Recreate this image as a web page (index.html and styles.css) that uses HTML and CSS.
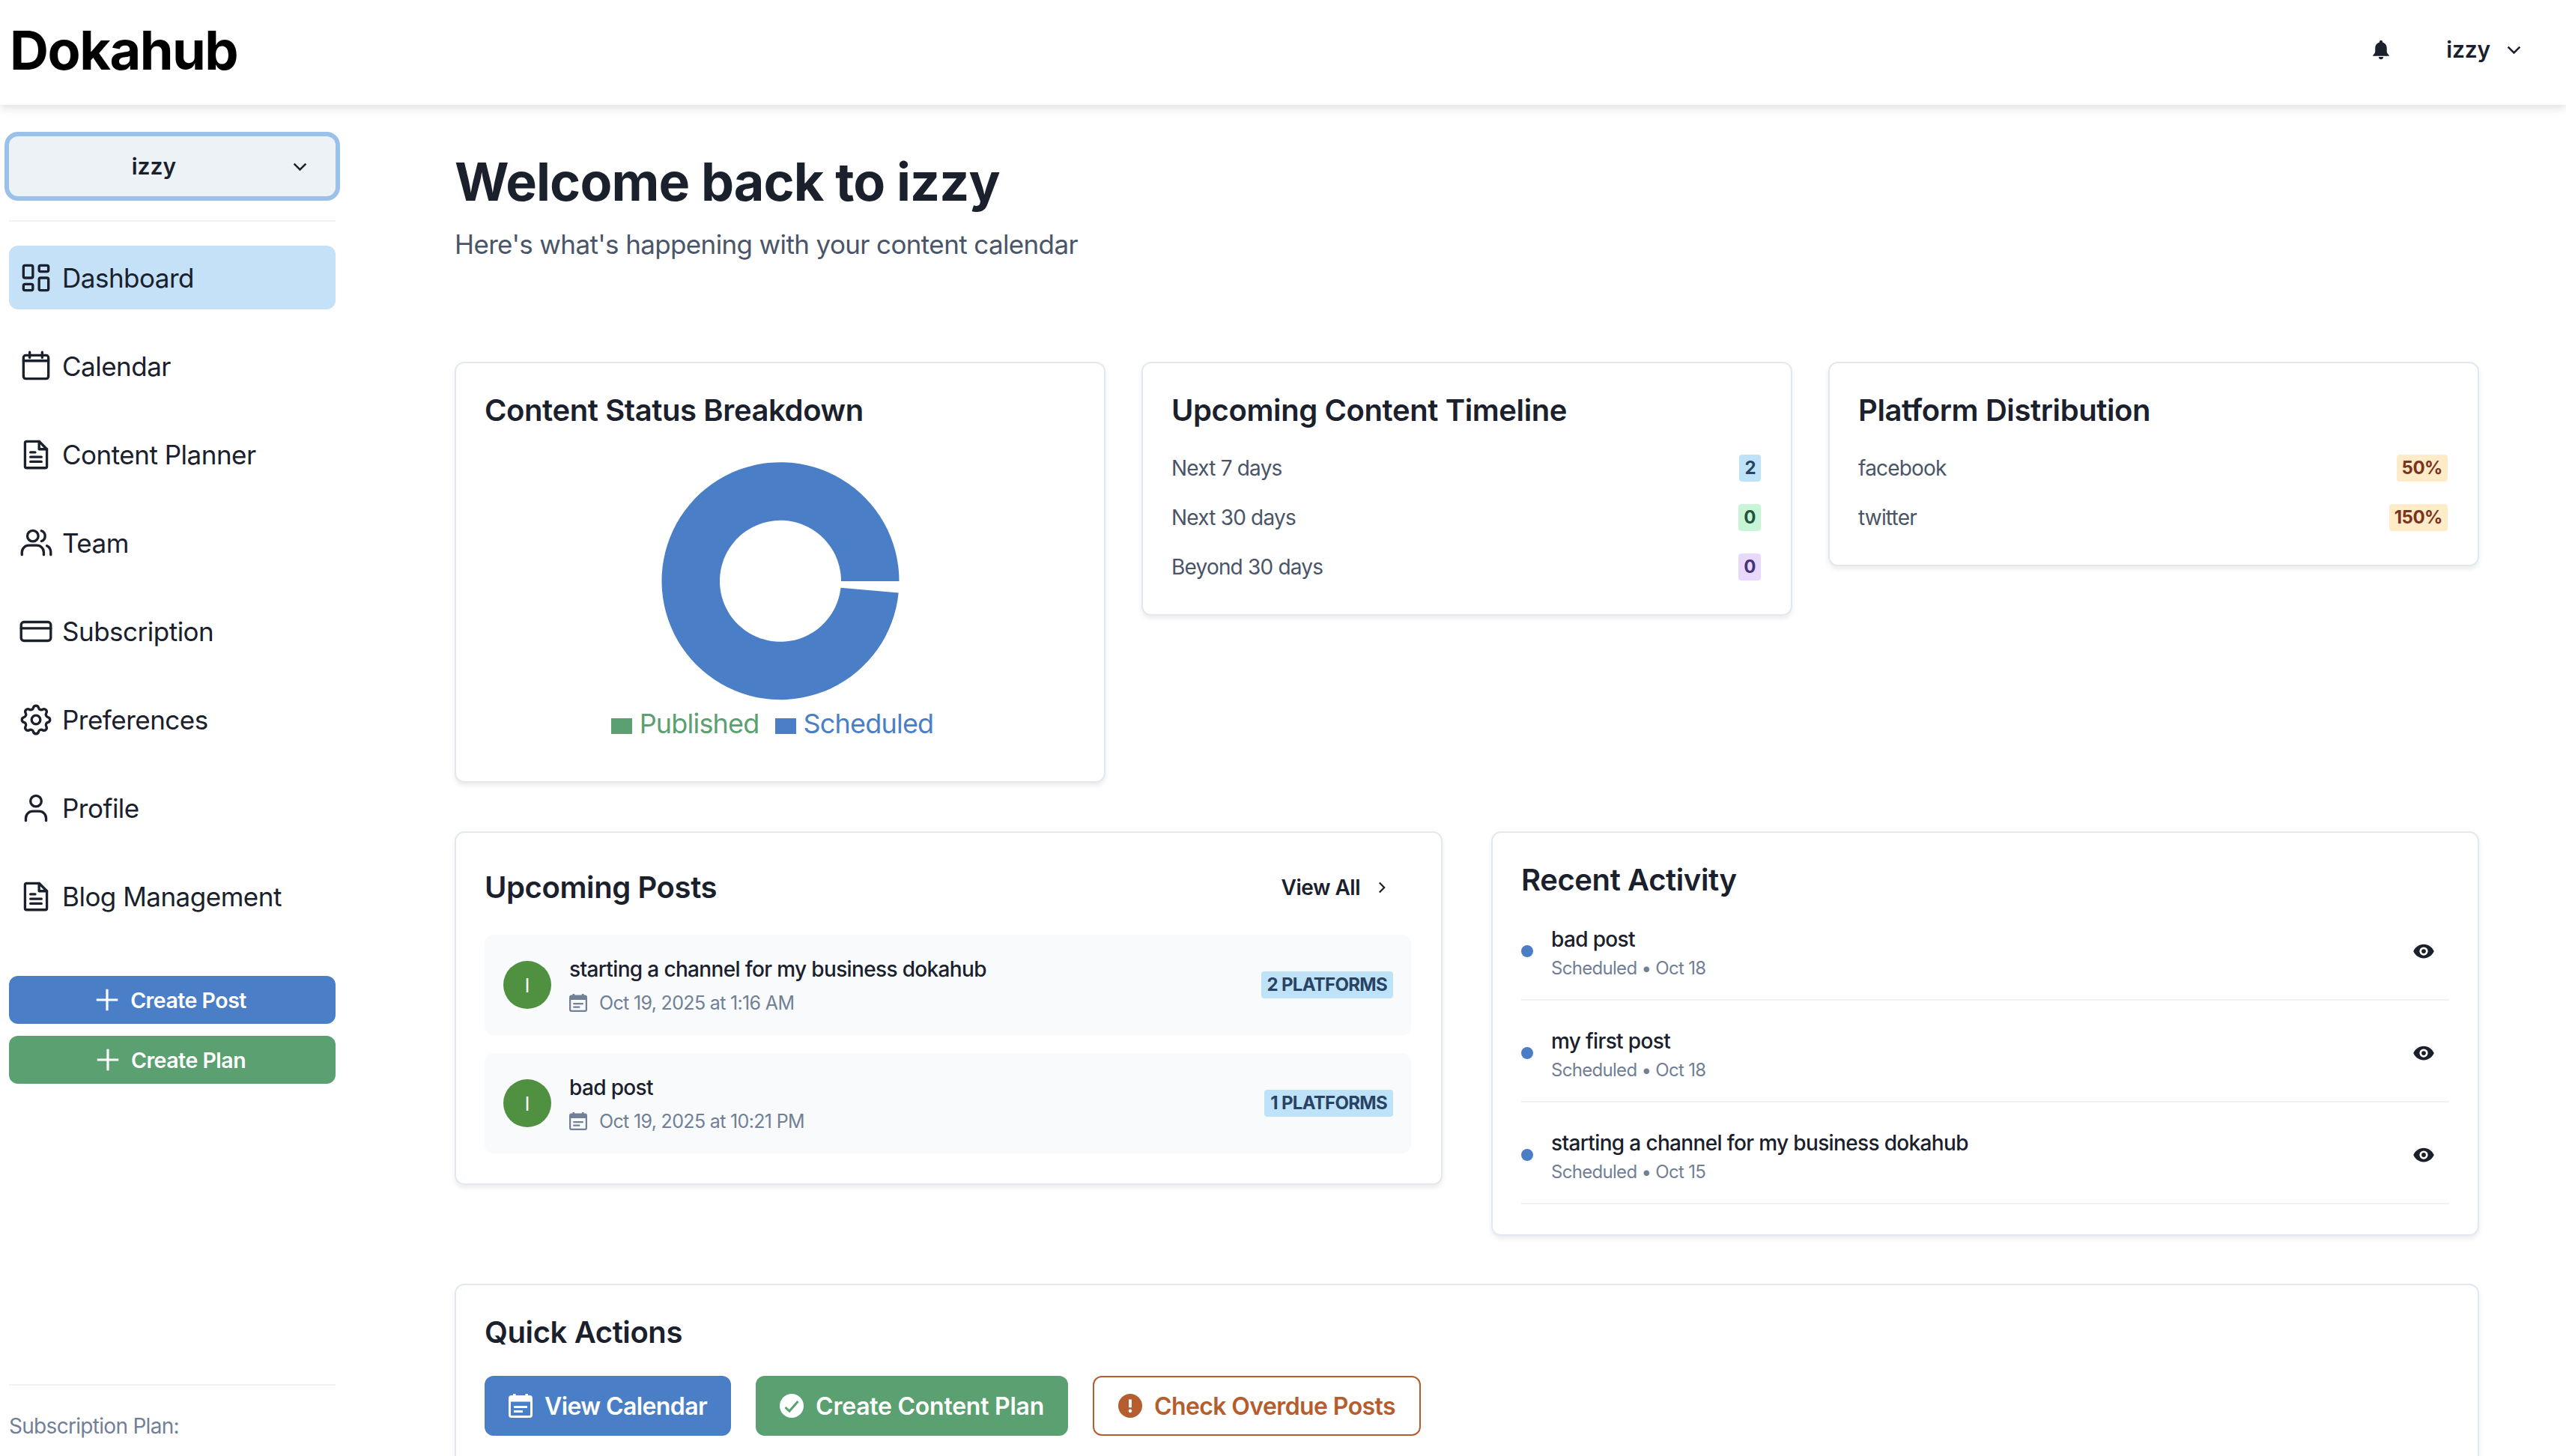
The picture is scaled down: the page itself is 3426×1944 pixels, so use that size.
FILE: index.html
```html
<!DOCTYPE html>
<html lang="en">
<head>
<meta charset="utf-8">
<title>Dokahub</title>
<link rel="stylesheet" href="styles.css">
</head>
<body>
<header class="topbar">
  <div class="logo">Dokahub</div>
  <div class="topbar-right">
    <svg class="bell" viewBox="0 0 24 24"><path d="M12 2.2a1.6 1.6 0 0 1 1.6 1.6v.5c3 .8 4.6 3.3 4.6 6.5v3.6c0 1.3 1.2 2.7 2.6 4.1v.5H3.2v-.5c1.4-1.4 2.6-2.8 2.6-4.1v-3.6c0-3.2 1.600-5.700 4.600-6.500v-.5A1.600 1.600 0 0 1 12 2.200z"/><path d="M9.500 20h5a2.500 2.500 0 0 1-5 0z"/></svg>
    <span class="top-user">izzy</span>
    <svg class="chev" viewBox="0 0 24 24"><path d="M5 8.500l7 7 7-7"/></svg>
  </div>
</header>
<div class="shell">
  <aside class="sidebar">
    <button class="picker"><span class="picker-name">izzy</span><svg class="chev" viewBox="0 0 24 24"><path d="M5 8.500l7 7 7-7"/></svg></button>
    <div class="side-rule"></div>
    <nav class="nav">
      <a class="nav-item active"><svg class="ico" viewBox="0 0 24 24"><rect x="4" y="4" width="6" height="8" rx="1"/><rect x="4" y="16" width="6" height="4" rx="1"/><rect x="14" y="12" width="6" height="8" rx="1"/><rect x="14" y="4" width="6" height="4" rx="1"/></svg>Dashboard</a>
      <a class="nav-item"><svg class="ico" viewBox="0 0 24 24"><rect x="4" y="5" width="16" height="15" rx="1.500"/><path d="M8 3v3.500M16 3v3.500M4 8.500h16"/></svg>Calendar</a>
      <a class="nav-item"><svg class="ico" viewBox="0 0 24 24"><path d="M6 3.500h8l5 5v11a1 1 0 0 1-1 1H6a1 1 0 0 1-1-1v-15a1 1 0 0 1 1-1z"/><path d="M14 3.500v5h5M8.500 10.500h3M8.500 13.500h7M8.500 16.500h7"/></svg>Content Planner</a>
      <a class="nav-item"><svg class="ico" viewBox="0 0 24 24"><circle cx="10" cy="7.500" r="3.500"/><path d="M3 19.500v-1.500a4.500 4.500 0 0 1 4.500-4.500h5a4.500 4.500 0 0 1 4.500 4.500v1.500M15.500 4.200a3.500 3.500 0 0 1 0 6.600M19 13.800a4.500 4.500 0 0 1 2.500 4.200v1.500"/></svg>Team</a>
      <a class="nav-item"><svg class="ico" viewBox="0 0 24 24"><rect x="2.500" y="6" width="19" height="12" rx="1.800"/><path d="M2.500 10h19"/></svg>Subscription</a>
      <a class="nav-item"><svg class="ico" viewBox="0 0 24 24"><path d="M10.325 4.317c.426-1.756 2.924-1.756 3.350 0a1.724 1.724 0 0 0 2.573 1.066c1.543-.94 3.310.826 2.370 2.370a1.724 1.724 0 0 0 1.065 2.572c1.756.426 1.756 2.924 0 3.350a1.724 1.724 0 0 0-1.066 2.573c.94 1.543-.826 3.310-2.370 2.370a1.724 1.724 0 0 0-2.572 1.065c-.426 1.756-2.924 1.756-3.350 0a1.724 1.724 0 0 0-2.573-1.066c-1.543.94-3.310-.826-2.370-2.370a1.724 1.724 0 0 0-1.065-2.572c-1.756-.426-1.756-2.924 0-3.350a1.724 1.724 0 0 0 1.066-2.573c-.94-1.543.826-3.310 2.370-2.370 1 .608 2.296.07 2.572-1.065z"/><circle cx="12" cy="12" r="2.800"/></svg>Preferences</a>
      <a class="nav-item"><svg class="ico" viewBox="0 0 24 24"><circle cx="12" cy="7.500" r="3.500"/><path d="M5.500 20v-1.500a4.500 4.500 0 0 1 4.500-4.500h4a4.500 4.500 0 0 1 4.500 4.500v1.500"/></svg>Profile</a>
      <a class="nav-item"><svg class="ico" viewBox="0 0 24 24"><path d="M6 3.500h8l5 5v11a1 1 0 0 1-1 1H6a1 1 0 0 1-1-1v-15a1 1 0 0 1 1-1z"/><path d="M14 3.500v5h5M8.500 10.500h3M8.500 13.500h7M8.500 16.500h7"/></svg>Blog Management</a>
    </nav>
    <div class="side-actions">
      <button class="side-btn blue"><svg class="plus" viewBox="0 0 24 24"><path d="M12 3v18M3 12h18"/></svg>Create Post</button>
      <button class="side-btn green"><svg class="plus" viewBox="0 0 24 24"><path d="M12 3v18M3 12h18"/></svg>Create Plan</button>
    </div>
    <div class="side-foot">Subscription Plan:</div>
  </aside>
  <main class="main">
    <h1 class="page-title">Welcome back to izzy</h1>
    <p class="page-sub">Here's what's happening with your content calendar</p>

    <section class="row-three">
      <article class="card chart-card">
        <h2 class="card-title">Content Status Breakdown</h2>
        <svg class="donut" viewBox="0 0 320 320"><path d="M318.500 160A158.500 158.500 0 1 0 317.700 175.600L240.500 168.800A81 81 0 1 1 241 160Z"/></svg>
        <div class="legend">
          <span class="leg leg-green"><i class="swatch"></i>Published</span>
          <span class="leg leg-blue"><i class="swatch"></i>Scheduled</span>
        </div>
      </article>
      <article class="card">
        <h2 class="card-title">Upcoming Content Timeline</h2>
        <ul class="stat-list">
          <li class="stat"><span>Next 7 days</span><b class="tag tag-blue">2</b></li>
          <li class="stat"><span>Next 30 days</span><b class="tag tag-green">0</b></li>
          <li class="stat"><span>Beyond 30 days</span><b class="tag tag-purple">0</b></li>
        </ul>
      </article>
      <article class="card">
        <h2 class="card-title">Platform Distribution</h2>
        <ul class="stat-list">
          <li class="stat"><span>facebook</span><b class="tag tag-orange">50%</b></li>
          <li class="stat"><span>twitter</span><b class="tag tag-orange">150%</b></li>
        </ul>
      </article>
    </section>

    <section class="row-two">
      <article class="card">
        <div class="card-head">
          <h2 class="card-title">Upcoming Posts</h2>
          <a class="view-all">View All<svg class="chev-r" viewBox="0 0 24 24"><path d="M8.500 5l7 7-7 7"/></svg></a>
        </div>
        <div class="post-list">
          <div class="post">
            <span class="avatar">I</span>
            <div class="post-body">
              <div class="post-title">starting a channel for my business dokahub</div>
              <div class="post-date"><svg class="cal-s" viewBox="0 0 32 32"><rect x="1.500" y="3.500" width="29" height="27" rx="2.500" fill="none" stroke="currentColor" stroke-width="3"/><path d="M2 4h28v6.500H2zM6 0h3.500v4H6zM22.500 0H26v4h-3.500z"/><path d="M7 16h18v3H7zM7 22h12v3H7z"/></svg>Oct 19, 2025 at 1:16 AM</div>
            </div>
            <span class="plat">2 Platforms</span>
          </div>
          <div class="post">
            <span class="avatar">I</span>
            <div class="post-body">
              <div class="post-title">bad post</div>
              <div class="post-date"><svg class="cal-s" viewBox="0 0 32 32"><rect x="1.500" y="3.500" width="29" height="27" rx="2.500" fill="none" stroke="currentColor" stroke-width="3"/><path d="M2 4h28v6.500H2zM6 0h3.500v4H6zM22.500 0H26v4h-3.500z"/><path d="M7 16h18v3H7zM7 22h12v3H7z"/></svg>Oct 19, 2025 at 10:21 PM</div>
            </div>
            <span class="plat">1 Platforms</span>
          </div>
        </div>
      </article>
      <article class="card">
        <h2 class="card-title">Recent Activity</h2>
        <div class="act-list">
          <div class="act"><i class="dot"></i><div class="act-body"><div class="act-title">bad post</div><div class="act-meta">Scheduled • Oct 18</div></div><svg class="eye" viewBox="0 0 24 24"><path fill-rule="evenodd" d="M12 4.500c5 0 9.200 3.100 11 7.500-1.800 4.400-6 7.500-11 7.500S2.800 16.400 1 12c1.800-4.400 6-7.500 11-7.500zm0 3a4.500 4.500 0 1 0 0 9 4.500 4.500 0 0 0 0-9zm0 2.200a2.300 2.300 0 1 1 0 4.600 2.300 2.300 0 0 1 0-4.600z"/></svg></div>
          <div class="act"><i class="dot"></i><div class="act-body"><div class="act-title">my first post</div><div class="act-meta">Scheduled • Oct 18</div></div><svg class="eye" viewBox="0 0 24 24"><path fill-rule="evenodd" d="M12 4.500c5 0 9.200 3.100 11 7.500-1.800 4.400-6 7.500-11 7.500S2.800 16.400 1 12c1.800-4.400 6-7.500 11-7.500zm0 3a4.500 4.500 0 1 0 0 9 4.500 4.500 0 0 0 0-9zm0 2.200a2.300 2.300 0 1 1 0 4.600 2.300 2.300 0 0 1 0-4.600z"/></svg></div>
          <div class="act"><i class="dot"></i><div class="act-body"><div class="act-title">starting a channel for my business dokahub</div><div class="act-meta">Scheduled • Oct 15</div></div><svg class="eye" viewBox="0 0 24 24"><path fill-rule="evenodd" d="M12 4.500c5 0 9.200 3.100 11 7.500-1.800 4.400-6 7.500-11 7.500S2.800 16.400 1 12c1.800-4.400 6-7.500 11-7.500zm0 3a4.500 4.500 0 1 0 0 9 4.500 4.500 0 0 0 0-9zm0 2.200a2.300 2.300 0 1 1 0 4.600 2.300 2.300 0 0 1 0-4.600z"/></svg></div>
        </div>
      </article>
    </section>

    <section class="card quick">
      <h2 class="card-title">Quick Actions</h2>
      <div class="quick-row">
        <button class="qbtn q-blue"><svg class="qico" viewBox="0 0 32 32"><rect x="1.500" y="3.500" width="29" height="27" rx="2.500" fill="none" stroke="currentColor" stroke-width="3"/><path d="M2 4h28v6.500H2zM6 0h3.500v4H6zM22.500 0H26v4h-3.500z"/><path d="M7 16h18v3H7zM7 22h12v3H7z"/></svg>View Calendar</button>
        <button class="qbtn q-green"><svg class="qico" viewBox="0 0 32 32"><circle cx="16" cy="16" r="16"/><path class="check" d="M7.500 18l5.500 5L24.500 10"/></svg>Create Content Plan</button>
        <button class="qbtn q-outline"><svg class="qico" viewBox="1.500 1.500 21 21"><path fill-rule="evenodd" d="M12 1.500a10.500 10.500 0 1 1 0 21 10.500 10.500 0 0 1 0-21zM10.700 6.500v7h2.600v-7zm1.300 8.500a1.500 1.500 0 1 0 0 3 1.500 1.500 0 0 0 0-3z"/></svg>Check Overdue Posts</button>
      </div>
    </section>
  </main>
</div>
</body>
</html>
```
FILE: styles.css
```css
* { box-sizing: border-box; }
html, body { margin: 0; height: 1944px; overflow: hidden; background: #fff; }
body { font-family: Inter, "Liberation Sans", sans-serif; color: #1a202c; }
h1, h2, p, ul { margin: 0; padding: 0; }
ul { list-style: none; }
button { font-family: inherit; border: 0; cursor: pointer; }

.topbar { height: 140px; display: flex; align-items: center; justify-content: space-between; padding: 0 56px 8px 13px; background: #fff; box-shadow: 0 4px 12px rgba(0,0,0,.13); position: relative; z-index: 2; }
.logo { font-size: 72px; font-weight: 700; color: #000; letter-spacing: -1.5px; }
.topbar-right { display: flex; align-items: center; }
.bell { width: 30px; height: 30px; fill: #1a202c; margin-right: 72px; }
.top-user { font-size: 30px; font-weight: 600; letter-spacing: -.2px; }
.chev { width: 27px; height: 27px; fill: none; stroke: #1a202c; stroke-width: 2.200; margin-left: 18px; }

.shell { display: flex; height: 1804px; }
.sidebar { width: 460px; flex: none; padding: 42px 12px 22px; display: flex; flex-direction: column; }
.picker { width: 436px; height: 80px; flex: none; display: flex; align-items: center; padding: 0 34px 0 12px; background: #edf2f7; border-radius: 12px; box-shadow: 0 0 0 6px #9ac1e9; color: #1a202c; }
.picker-name { flex: 1; text-align: center; font-size: 30px; font-weight: 600; }
.picker .chev { margin-left: 0; }
.side-rule { height: 2px; background: #edf2f7; margin: 32px 0; flex: none; }
.nav { display: flex; flex-direction: column; gap: 33px; }
.nav-item { height: 85px; display: flex; align-items: center; gap: 10px; padding-left: 11px; border-radius: 12px; font-size: 35px; letter-spacing: -.5px; color: #1a202c; }
.nav-item.active { background: #c4e1f7; }
.ico { width: 50px; height: 50px; flex: none; fill: none; stroke: #1a202c; stroke-width: 1.600; stroke-linecap: round; stroke-linejoin: round; }
.side-actions { display: flex; flex-direction: column; gap: 16px; margin-top: 64px; }
.side-btn { height: 64px; padding-right: 13px; border-radius: 12px; color: #fff; font-size: 28.500px; letter-spacing: -.5px; font-weight: 600; display: flex; align-items: center; justify-content: center; gap: 12px; }
.plus { width: 38px; height: 38px; fill: none; stroke: #fff; stroke-width: 2; }
.blue { background: #4a7fc7; }
.green { background: #5aa070; }
.side-foot { margin-top: auto; border-top: 2px solid #edf2f7; padding-top: 36px; font-size: 28px; letter-spacing: -.7px; color: #718096; line-height: 36px; }

.main { flex: 1; padding: 60px 116px 0 147px; min-width: 0; }
.page-title { font-size: 70px; line-height: 86px; font-weight: 700; letter-spacing: -.9px; color: #1a202c; }
.page-sub { font-size: 35px; line-height: 44px; margin-top: 18px; letter-spacing: -.63px; color: #4a5568; }

.card { background: #fff; border: 2px solid #e2e8f0; border-radius: 13px; padding: 38px 38px 42px; box-shadow: 0 4px 6px rgba(0,0,0,.08); }
.card-title { font-size: 40px; line-height: 50px; font-weight: 600; letter-spacing: -.4px; color: #1a202c; }
.row-three { display: grid; grid-template-columns: repeat(3, 1fr); gap: 48px; align-items: start; margin-top: 135px; }
.row-two { display: grid; grid-template-columns: 1fr 1fr; gap: 65px; align-items: start; margin-top: 65px; }
.row-two .card { padding-bottom: 40px; }
.quick { margin-top: 64px; }

.chart-card { padding-bottom: 55px; }
.donut { display: block; width: 320px; height: 320px; margin: 43px auto 0; fill: #4a7fc7; }
.legend { height: 44px; margin-top: 8px; display: flex; justify-content: center; align-items: center; gap: 21px; padding-right: 21px; font-size: 36px; letter-spacing: -.8px; }
.leg { display: flex; align-items: center; gap: 10px; }
.swatch { width: 28px; height: 21px; background: currentColor; margin-top: 6px; }
.leg-green { color: #5aa070; }
.leg-blue { color: #4a7fc7; }

.stat-list { margin: 34px 2px 3px 0; display: flex; flex-direction: column; gap: 30px; }
.stat { height: 36px; display: flex; align-items: center; justify-content: space-between; font-size: 28px; letter-spacing: -.8px; color: #4a5568; }
.tag { height: 36px; line-height: 36px; padding: 0 7px; border-radius: 4px; font-size: 24px; letter-spacing: -.5px; font-weight: 700; }
.tag-blue { background: #bee3f8; color: #2a4365; }
.tag-green { background: #c6f6d5; color: #22543d; }
.tag-purple { background: #e9d8fd; color: #44337a; }
.tag-orange { background: #feebc8; color: #7b341e; }

.card-head { height: 68px; margin-top: 1px; padding-right: 30px; display: flex; align-items: center; justify-content: space-between; }
.view-all { display: flex; align-items: center; gap: 18px; font-size: 28px; letter-spacing: -.5px; font-weight: 600; color: #1a202c; }
.chev-r { width: 22px; height: 22px; fill: none; stroke: #1a202c; stroke-width: 2.400; }
.post-list { margin: 29px 2px 0 0; display: flex; flex-direction: column; gap: 24px; }
.post { height: 134px; background: #f8fafc; border-radius: 12px; display: flex; align-items: center; padding: 0 24px 0 25px; }
.avatar { width: 64px; height: 64px; flex: none; border-radius: 50%; background: #4f9140; color: #fff; display: flex; align-items: center; justify-content: center; font-size: 26px; }
.post-body { flex: 1; margin-left: 24px; }
.post-title { font-size: 28px; line-height: 38px; font-weight: 500; letter-spacing: -.65px; color: #1a202c; }
.post-date { display: flex; align-items: center; gap: 16px; margin-top: 10px; font-size: 25px; line-height: 32px; letter-spacing: -.66px; color: #718096; }
.cal-s { width: 24px; height: 24px; fill: currentColor; color: #718096; flex: none; }
.plat { height: 36px; line-height: 36px; padding: 0 8px; border-radius: 4px; background: #bee3f8; color: #2a4365; font-size: 24px; letter-spacing: -.7px; font-weight: 700; text-transform: uppercase; }

.act { height: 136px; padding-top: 6px; border-bottom: 2px solid #edf2f7; display: flex; align-items: center; }
.dot { width: 16px; height: 16px; flex: none; border-radius: 50%; background: #4a7fc7; }
.act-body { flex: 1; margin: 6px 0 0 24px; }
.act-title { font-size: 28px; line-height: 38px; font-weight: 500; letter-spacing: -.65px; color: #1a202c; }
.act-meta { font-size: 24px; line-height: 36px; margin-top: 2px; letter-spacing: -.7px; color: #718096; }
.eye { width: 30px; height: 30px; fill: #1a202c; margin-right: 19px; }

.quick-row { display: flex; gap: 33px; margin-top: 33px; }
.qbtn { height: 80px; display: flex; align-items: center; gap: 16px; padding: 0 32px; border-radius: 12px; font-size: 32px; letter-spacing: -.6px; font-weight: 600; }
.qico { width: 32px; height: 32px; fill: currentColor; flex: none; }
.check { fill: none; stroke: #5aa070; stroke-width: 3; }
.q-blue { background: #4a7fc7; color: #fff; }
.q-green { background: #5aa070; color: #fff; letter-spacing: -.25px; }
.q-outline { background: #fff; color: #b55d2f; border: 2px solid #b55d2f; }
```
